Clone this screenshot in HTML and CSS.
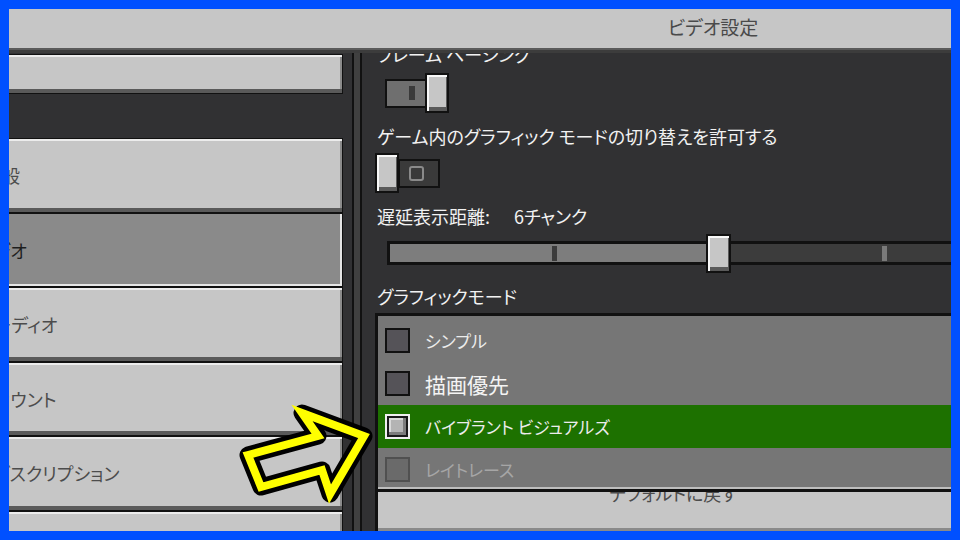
FILE: index.html
```html
<!DOCTYPE html>
<html lang="ja">
<head>
<meta charset="utf-8">
<title>ビデオ設定</title>
<link rel="stylesheet" href="styles.css">
</head>
<body>
<div class="screen">
  <header class="topbar"><span class="title">ビデオ設定</span></header>
  <div class="main">
    <nav class="sidebar">
      <div class="nav-list">
        <div class="nav-btn nav-top"></div>
        <div class="nav-section"></div>
        <div class="nav-btn nav-general">一般</div>
        <div class="nav-btn selected">ビデオ</div>
        <div class="nav-btn">オーディオ</div>
        <div class="nav-btn">アカウント</div>
        <div class="nav-btn">サブスクリプション</div>
        <div class="nav-btn">言語</div>
      </div>
    </nav>
    <div class="divider"></div>
    <section class="content">
      <div class="label label-cut">フレーム ペーシング</div>
      <div class="toggle toggle-on">
        <div class="track"><span class="bar"></span></div>
        <div class="thumb"></div>
      </div>
      <div class="label label-gap">ゲーム内のグラフィック モードの切り替えを許可する</div>
      <div class="toggle toggle-off">
        <div class="thumb"></div>
        <div class="track"><span class="ring"></span></div>
      </div>
      <div class="label label-gap label-dist">遅延表示距離: 6チャンク</div>
      <div class="slider">
        <div class="slider-track">
          <div class="slider-fill" style="width:318px"></div>
          <span class="tick tick-a"></span>
          <span class="tick tick-b"></span>
        </div>
        <div class="thumb slider-thumb"></div>
      </div>
      <div class="label label-gap">グラフィックモード</div>
      <div class="list">
        <div class="option"><span class="cb"></span><span class="opt-text">シンプル</span></div>
        <div class="option"><span class="cb"></span><span class="opt-text opt-big">描画優先</span></div>
        <div class="option selected"><span class="cb checked"></span><span class="opt-text">バイブラント ビジュアルズ</span></div>
        <div class="option disabled"><span class="cb"></span><span class="opt-text">レイトレース</span></div>
      </div>
      <div class="reset-btn"><span class="reset-label">デフォルトに戻す</span></div>
    </section>
  </div>
  <svg class="arrow" width="160" height="120" viewBox="0 0 160 120">
    <polygon points="23,60 93,41 77,18 139,41 105,99 97,75 36,92" fill="none" stroke="#000" stroke-width="17" stroke-linejoin="round"/>
    <polygon points="23,60 93,41 77,18 139,41 105,99 97,75 36,92" fill="none" stroke="#ffff00" stroke-width="8" stroke-linejoin="miter" stroke-miterlimit="4"/>
  </svg>
</div>
</body>
</html>
```

FILE: styles.css
```css
* { box-sizing: border-box; }

body {
  margin: 0;
  background: #0050ff;
  font-family: "Noto Sans CJK JP", "Noto Sans", sans-serif;
  font-feature-settings: "palt" 1;
}

.screen {
  position: relative;
  width: 942px;
  height: 522px;
  margin: 9px;
  overflow: hidden;
  background: #313133;
  display: flex;
  flex-direction: column;
}

.topbar {
  flex: none;
  height: 41px;
  background: #c6c6c6;
  border-bottom: 2px solid #5a5a5a;
  display: flex;
  align-items: center;
  justify-content: center;
  padding-left: 466px;
  padding-bottom: 4px;
}

.title {
  font-size: 19px;
  line-height: 24px;
  color: #4a4a4a;
}

.main {
  flex: 1;
  min-height: 0;
  display: flex;
  border-top: 3px solid #3c3c3c;
}

/* sidebar */
.sidebar {
  flex: none;
  width: 343px;
  overflow: hidden;
}

.nav-list {
  width: 443px;
  margin-left: -109px;
  padding-top: 1px;
}

.nav-btn {
  height: 74.5px;
  border: 1px solid #111;
  background: #c6c6c6;
  box-shadow: inset 0 2px 0 #ececec, inset 0 -4px 0 #5a5a5a, inset -2px 0 0 #8b8b8b;
  display: flex;
  align-items: center;
  padding-left: 76px;
  font-size: 18px;
  color: #4c4c4c;
  white-space: nowrap;
}

.nav-btn.nav-top { height: 40px; }
.nav-btn.nav-general { padding-left: 83px; }

.nav-btn.selected {
  background: #8a8a8a;
  color: #1e1e1e;
  box-shadow: inset -2px 0 0 #e6e6e6, inset 0 -2px 0 #e6e6e6;
}

.nav-section { height: 44px; }

.divider {
  flex: none;
  width: 10px;
  background: #404040;
  border-left: 2px solid #111;
  border-right: 2px solid #111;
}

/* content */
.content {
  flex: 1;
  min-width: 0;
  overflow: hidden;
  padding-left: 15px;
  color: #f2f2f2;
}

.label {
  font-size: 18px;
  line-height: 24px;
  white-space: nowrap;
}

.label-cut { margin-top: -11px; }
.label-gap { margin-top: 11px; }
.label-dist { word-spacing: 20px; }

.toggle {
  display: flex;
  align-items: center;
  height: 40px;
}

.toggle-on { margin-top: 7px; margin-left: 8px; }
.toggle-off { margin-top: 5px; margin-left: -2px; }

.track {
  height: 29px;
  border: 2px solid #111;
  display: flex;
  align-items: center;
}

.toggle-on .track { width: 42px; background: #6f6f6f; }
.toggle-off .track { width: 42px; margin-left: -1px; background: #3a3a3a; }

.bar {
  width: 6px;
  height: 14px;
  margin-left: 22px;
  background: #3a3a3a;
}

.ring {
  width: 15px;
  height: 15px;
  margin-left: 9px;
  border: 2px solid #8a8a8a;
  border-radius: 3px;
}

.thumb {
  width: 24px;
  height: 40px;
  flex: none;
  border: 2px solid #111;
  background: #c6c6c6;
  box-shadow: inset 2px 2px 0 #f8f8f8, inset -1px -4px 0 #5a5a5a;
}

.toggle-on .thumb { margin-left: -2px; }

/* slider */
.slider {
  position: relative;
  width: 600px;
  height: 39px;
  margin-top: 6px;
  margin-left: 10px;
  padding-top: 7px;
}

.slider-track {
  position: relative;
  height: 24px;
  border: 3px solid #111;
  background: #3c3c3c;
}

.slider-fill {
  height: 100%;
  background: #7d7d7d;
}

.tick {
  position: absolute;
  top: 1.5px;
  width: 5px;
  height: 15px;
}

.tick-a { left: 162px; background: #3c3c3c; }
.tick-b { left: 492px; background: #7a7a7a; }

.slider-thumb {
  position: absolute;
  left: 319px;
  top: 0;
  width: 25px;
  height: 39px;
}

/* list */
.list {
  width: 594px;
  height: 179px;
  margin-top: 5px;
  margin-left: -2px;
  border: 3px solid #111;
  border-right: 0;
  background: #767676;
  padding-top: 3px;
  overflow: hidden;
  box-shadow: inset 0 -2px 0 #bdbdbd;
}

.option {
  height: 43px;
  display: flex;
  align-items: center;
  gap: 15px;
  padding-left: 7px;
}

.option.selected { background: #1d7100; }

.cb {
  flex: none;
  width: 25px;
  height: 25px;
  border: 2px solid #111;
  background: #555358;
}

.cb.checked {
  border: 2px solid #f0f0f0;
  background: #b4b4b4;
  box-shadow: inset 0 0 0 2px #1a1a1a, inset -5px -5px 0 #7c7c7c, inset 4px 4px 0 #dadada;
}

.option.disabled .cb {
  border-color: #505050;
  background: #6a6a6a;
}

.opt-text {
  font-size: 17px;
  line-height: 24px;
  color: #ececec;
  white-space: nowrap;
}

.opt-text.opt-big { font-size: 21px; color: #f4f4f4; }
.option.disabled .opt-text { color: #a6a6a6; }

/* reset button */
.reset-btn {
  width: 594px;
  height: 39px;
  margin-left: -2px;
  border-left: 3px solid #111;
  background: #c6c6c6;
  box-shadow: inset 0 -3px 0 #8a8a8a;
  overflow: hidden;
  text-align: center;
  color: #4c4c4c;
  font-size: 18px;
}

.reset-label {
  display: block;
  line-height: 24px;
  margin-top: -11px;
}

/* annotation arrow */
.arrow {
  position: absolute;
  left: 216px;
  top: 386px;
}
```
